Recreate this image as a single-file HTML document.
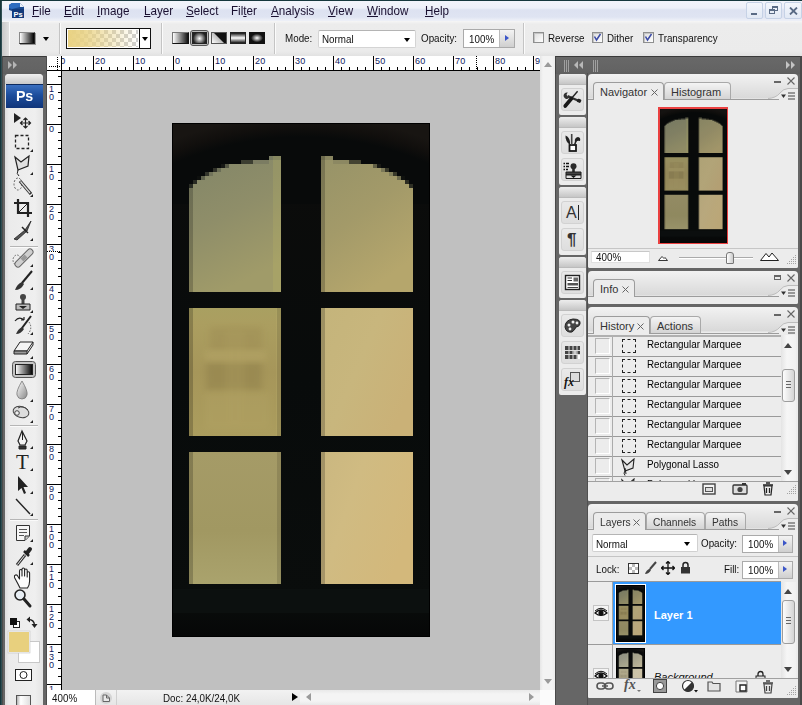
<!DOCTYPE html>
<html><head><meta charset="utf-8"><title>Photoshop</title>
<style>
*{box-sizing:border-box;margin:0;padding:0}
html,body{width:802px;height:705px;overflow:hidden;background:#666}
body{font-family:"Liberation Sans",sans-serif;font-size:10.5px;color:#111;position:relative}
.a{position:absolute}
.t{position:absolute;white-space:nowrap;line-height:1}
#menubar{left:0;top:0;width:802px;height:21px;background:linear-gradient(#f3f5fb 0,#eef1f9 8px,#dde2f1 10px,#dfe4f2 17px,#eceff7 20px)}
#menubar .t{top:5px;font-size:12.4px;color:#1a1030;transform:scaleX(.94);transform-origin:0 50%}
#menubar u{text-decoration:underline;text-underline-offset:1px}
#optbar{left:0;top:21px;width:802px;height:35px;background:linear-gradient(#f6f6f6 0,#ececec 3px,#ebebeb 30px,#e2e2e2 35px)}
.sep{position:absolute;width:2px;top:2px;height:31px;border-left:1px solid #c4c4c4;border-right:1px solid #fbfbfb}
.lbl{font-size:11px;color:#111;transform:scaleX(.893);transform-origin:0 50%}
.field{position:absolute;background:#fff;border:1px solid #d4d4d4;border-top-color:#b4b4b4}
.cb{position:absolute;width:11px;height:11px;border:1px solid #8e8f8f;box-shadow:inset 1px 1px 0 #c4c4c4;background:linear-gradient(135deg,#dcdcdc,#fff)}
.ruler{background:#fff}
.rn{position:absolute;font-size:9px;line-height:1;color:#0e1860;letter-spacing:.2px}
.dock{background:#666}
.grp{position:absolute;left:559px;width:27px;background:#ececec;border-radius:3px 3px 2px 2px;overflow:hidden}
.grp:before{content:"";position:absolute;left:0;top:0;right:0;height:10px;background:linear-gradient(#ededed,#c6c6c6);border-bottom:1px solid #bbb}
.ib{position:absolute;left:2px;width:23px;height:23px;border:1px solid #d2d2d2;border-radius:3px;background:linear-gradient(#e9e9e9,#dedede)}
.panel{position:absolute;left:588px;width:210px;background:linear-gradient(#f2f2f2 0,#d9d9d9 24px,#ececec 25px);border-radius:4px 4px 2px 2px;overflow:hidden}
.tab{position:absolute;height:17px;margin-left:-1px;border:1px solid #a9a9a9;border-bottom:none;border-radius:4px 4px 0 0;background:linear-gradient(#f4f4f4,#d4d4d4);font-size:11px;color:#333;line-height:19px;padding-left:6px;white-space:nowrap}
.tab span{display:inline-block;transform:scaleX(var(--sx,.93));transform-origin:0 50%}
.tab.on{background:#ececec;height:18px;border-color:#9c9c9c}
.tab .x{position:absolute;right:4px;top:0;font-size:11px;color:#555}
.pbody{position:absolute;left:0;right:0;background:#ececec;border-top:1px solid #9c9c9c}
.hrow{position:absolute;left:0;width:193px;height:20px;border-bottom:1px solid #9a9a9a}
.hrow .c{position:absolute;left:7px;top:1px;width:15px;height:16px;border:1px solid #b4b4b4;border-right-color:#fff;border-bottom-color:#fff;background:#ececec}
.hrow .v{position:absolute;left:24px;top:0;width:1px;height:20px;background:#aaa}
.hrow .m{position:absolute;left:34px;top:2px;width:14px;height:14px;border:1px dashed #222}
.hrow .n{position:absolute;left:59px;top:2px;font-size:11px;transform:scaleX(.893);transform-origin:0 50%;line-height:1;white-space:nowrap;color:#000}
.sb{position:absolute;background:linear-gradient(90deg,#e4e4e4,#f6f6f6 40%,#f0f0f0)}
.thumb{position:absolute;left:1px;width:13px;border:1px solid #9d9d9d;border-radius:3px;background:linear-gradient(90deg,#fdfdfd,#d4d4d4)}
</style></head><body>
<!-- window edges -->
<div class="a" id="menubar">
  <svg class="a" style="left:8px;top:2px" width="17" height="17" viewBox="0 0 17 17"><path d="M1 3 L4 1 L12 1 L16 5 L16 16 L4 16 L4 9 L1 8Z" fill="#1b4a8f"/><path d="M1 3 L4 1 L12 1 L12 5 L4 7 L1 6Z" fill="#2e6cc0"/><path d="M12 1 L16 5 L12 5Z" fill="#e8eef8"/><rect x="4" y="7" width="12" height="9" fill="#123a7c"/><text x="5.5" y="14.5" font-family="Liberation Sans,sans-serif" font-size="7.5" font-weight="bold" fill="#fff">Ps</text></svg>
  <span class="t" style="left:32px"><u>F</u>ile</span>
  <span class="t" style="left:64px"><u>E</u>dit</span>
  <span class="t" style="left:97px"><u>I</u>mage</span>
  <span class="t" style="left:144px"><u>L</u>ayer</span>
  <span class="t" style="left:186px"><u>S</u>elect</span>
  <span class="t" style="left:231px">Fil<u>t</u>er</span>
  <span class="t" style="left:271px"><u>A</u>nalysis</span>
  <span class="t" style="left:328px"><u>V</u>iew</span>
  <span class="t" style="left:367px"><u>W</u>indow</span>
  <span class="t" style="left:425px"><u>H</u>elp</span>
  <!-- window buttons -->
  <div class="a" style="left:746px;top:2px;width:17px;height:17px;border:1px solid #c6d2e6;border-radius:2px;background:linear-gradient(#f4f7fc,#e2e9f5)"><div class="a" style="left:4px;top:10px;width:6px;height:2px;background:#5a6b85"></div></div>
  <div class="a" style="left:765px;top:2px;width:17px;height:17px;border:1px solid #c6d2e6;border-radius:2px;background:linear-gradient(#f4f7fc,#e2e9f5)"><div class="a" style="left:6px;top:3px;width:6px;height:5px;border:1px solid #5a6b85;border-top-width:2px"></div><div class="a" style="left:3px;top:6px;width:6px;height:5px;border:1px solid #5a6b85;border-top-width:2px;background:#e8eef7"></div></div>
  <div class="a" style="left:784px;top:2px;width:18px;height:17px;border:1px solid #c6d2e6;border-radius:2px;background:linear-gradient(#f4f7fc,#e2e9f5)"><svg class="a" style="left:4px;top:4px" width="9" height="8" viewBox="0 0 9 8"><path d="M1 0.5 L8 7.5 M8 0.5 L1 7.5" stroke="#5a6b85" stroke-width="1.8"/></svg></div>
</div>
<div class="a" id="optbar">
  <div class="a" style="left:2px;top:1px;width:7px;height:34px;background:linear-gradient(90deg,#c9c9c9,#e0e0e0)"></div>
  <div class="a" style="left:9px;top:1px;width:1px;height:34px;background:#fafafa"></div>
  <!-- tool preset: gradient icon -->
  <div class="a" style="left:19px;top:11px;width:16px;height:12px;background:linear-gradient(90deg,#fff,#000);box-shadow:1px 1px 0 #999;border:1px solid #8a8a8a;border-right-color:#222;border-bottom-color:#222"></div>
  <div class="a" style="left:43px;top:16px;border:3px solid transparent;border-top:4px solid #000;border-bottom:none"></div>
  <div class="sep" style="left:59px"></div>
  <!-- gradient picker -->
  <div class="a" style="left:66px;top:7px;width:85px;height:21px;border:1px solid #111;background:#fff">
    <div class="a" style="left:1px;top:1px;width:70px;height:17px;background:linear-gradient(90deg,#e9d283 0,rgba(233,210,131,.85) 25%,rgba(240,225,170,0) 100%),repeating-conic-gradient(#cfcfcf 0 25%,#fff 0 50%) 0 0/8px 8px"></div>
    <div class="a" style="left:72px;top:0;width:1px;height:19px;background:#111"></div>
    <div class="a" style="left:75px;top:8px;border:3px solid transparent;border-top:4px solid #000;border-bottom:none"></div>
  </div>
  <div class="sep" style="left:161px"></div>
  <!-- gradient type buttons -->
  <div class="a" style="left:172px;top:11px;width:17px;height:12px;background:linear-gradient(90deg,#fff,#111);border:1px solid #777;border-right-color:#111;border-bottom-color:#111"></div>
  <div class="a" style="left:190px;top:9px;width:19px;height:16px;border:1px solid #555;border-radius:3px;background:#bbb"></div>
  <div class="a" style="left:192px;top:11px;width:15px;height:12px;background:radial-gradient(circle at 50% 55%,#fff 0,#222 75%);border:1px solid #222"></div>
  <div class="a" style="left:211px;top:11px;width:16px;height:12px;background:linear-gradient(45deg,#fff 0,#bbb 49%,#111 51%,#111);border:1px solid #555"></div>
  <div class="a" style="left:230px;top:11px;width:16px;height:12px;background:linear-gradient(#111,#fff 50%,#111);border:1px solid #222"></div>
  <div class="a" style="left:249px;top:11px;width:16px;height:12px;background:radial-gradient(ellipse at 50% 50%,#fff 0,#111 60%);border:1px solid #111"></div>
  <div class="sep" style="left:274px"></div>
  <span class="t lbl" style="left:285px;top:12px">Mode:</span>
  <div class="field" style="left:318px;top:9px;width:98px;height:18px;border-radius:2px"></div>
  <span class="t lbl" style="left:322px;top:13px">Normal</span>
  <div class="a" style="left:404px;top:17px;border:3.5px solid transparent;border-top:4px solid #000;border-bottom:none"></div>
  <span class="t lbl" style="left:421px;top:12px">Opacity:</span>
  <div class="field" style="left:463px;top:8px;width:52px;height:19px;border-color:#aaa"></div>
  <span class="t lbl" style="left:469px;top:13px">100%</span>
  <div class="a" style="left:499px;top:9px;width:15px;height:17px;background:linear-gradient(#f3f3f3,#cfcfcf);border-left:1px solid #bbb"></div>
  <div class="a" style="left:505px;top:14px;border:3.5px solid transparent;border-left:4px solid #3b55c8;border-right:none"></div>
  <div class="sep" style="left:523px"></div>
  <div class="cb" style="left:533px;top:11px"></div>
  <span class="t lbl" style="left:548px;top:12px">Reverse</span>
  <div class="cb" style="left:592px;top:11px"><svg width="9" height="9" viewBox="0 0 9 9" style="display:block"><path d="M1.5 3.5 L3.5 7 L7.5 1" stroke="#3a4aa6" stroke-width="1.5" fill="none"/></svg></div>
  <span class="t lbl" style="left:607px;top:12px">Dither</span>
  <div class="cb" style="left:643px;top:11px"><svg width="9" height="9" viewBox="0 0 9 9" style="display:block"><path d="M1.5 3.5 L3.5 7 L7.5 1" stroke="#3a4aa6" stroke-width="1.5" fill="none"/></svg></div>
  <span class="t lbl" style="left:658px;top:12px">Transparency</span>
</div>
<div class="a" style="left:0;top:0;width:802px;height:1px;background:#16383d"></div>
<div class="a" style="left:0;top:0;width:1px;height:705px;background:#17363b"></div>
<div class="a" style="left:1px;top:1px;width:1px;height:705px;background:#2f4e53"></div>
<!-- left tool dock -->
<div class="a dock" style="left:2px;top:56px;width:45px;height:649px"></div>
<div class="a" style="left:2px;top:56px;width:45px;height:18px;background:linear-gradient(#676767 0,#646464 12px,#5e5e5e 18px);border-top:1px solid #3a3a3a"></div><div class="a" style="left:2px;top:56px;width:1px;height:649px;background:#4c4c4c"></div><div class="a" style="left:46px;top:56px;width:1px;height:649px;background:#4c4c4c"></div>
<svg class="a" style="left:8px;top:61px" width="10" height="8" viewBox="0 0 10 8"><path d="M0 0 L4 4 L0 8Z M5 0 L9 4 L5 8Z" fill="#b5b5b5"/></svg>
<div class="a" style="left:5px;top:74px;width:38px;height:640px;border-radius:4px 4px 0 0;background:linear-gradient(90deg,#dedede 0,#ebebeb 4px,#efefef 30px,#e4e4e4 38px);overflow:hidden">
  <div class="a" style="left:0;top:0;width:38px;height:10px;background:linear-gradient(#efefef,#c9c9c9)"></div>
  <div class="a" style="left:1px;top:10px;width:37px;height:24px;background:linear-gradient(#3a6fc0 0,#1c4d9c 45%,#10357a 100%);border-top:1px solid #0d2a5e"></div>
  <span class="t" style="left:11px;top:14px;font-size:15.5px;font-weight:bold;color:#fff;letter-spacing:-0.2px;transform:scaleX(.92);transform-origin:0 0">Ps</span>
</div>
<svg class="a" style="left:5px;top:108px" width="38" height="600" viewBox="0 0 38 600" fill="none" stroke="#222" stroke-width="1">
  <!-- coordinates: svg y = page y - 108, x = page x - 5 -->
  <!-- move -->
  <path d="M9 5 L9 15 L16 10Z" fill="#222" stroke="none"/>
  <path d="M20.5 10 V20 M15.5 15 H25.5 M18.5 12 L20.5 10 L22.5 12 M18.5 18 L20.5 20 L22.5 18 M17.5 13 L15.5 15 L17.5 17 M23.5 13 L25.5 15 L23.5 17" stroke-width="1.2"/>
  <!-- marquee -->
  <rect x="10.5" y="27.5" width="13" height="13" stroke-dasharray="3 2" stroke-width="1.3"/>
  <path d="M28 44 L28 41 L25 44Z" fill="#222" stroke="none"/>
  <!-- lasso -->
  <path d="M10 49 L16 54 L24 48 L23 58 L13 62 Z" stroke-width="1.2" fill="#e0e0e0"/>
  <path d="M13 62 Q11 66 14 68" stroke-width="1"/>
  <path d="M28 67 L28 64 L25 67Z" fill="#222" stroke="none"/>
  <!-- quick select -->
  <ellipse cx="13" cy="76" rx="4" ry="6" stroke-dasharray="2 1.5" stroke="#666"/>
  <path d="M15 73 L26 86" stroke-width="3.2" stroke="#333"/><path d="M15.5 73.5 L25 85" stroke-width="1.2" stroke="#ddd"/>
  <path d="M28 89 L28 86 L25 89Z" fill="#222" stroke="none"/>
  <!-- crop -->
  <path d="M13 91 V105 H27 M9 95 H23 V109" stroke-width="2.2" stroke="#222"/><path d="M13 105 L23 95" stroke-width="1"/>
  <!-- slice -->
  <path d="M9 131 L20 122 L26 113 L22 123 L12 132Z" fill="#555" stroke="#222" stroke-width="0.8"/><path d="M17 119 L23 125" stroke-width="1.5"/>
  <path d="M28 133 L28 130 L25 133Z" fill="#222" stroke="none"/>
  <!-- sep -->
  <path d="M5 138.5 H33" stroke="#b5b5b5"/><path d="M5 139.5 H33" stroke="#fafafa"/>
  <!-- healing brush (band-aid) -->
  <ellipse cx="12" cy="152" rx="4" ry="5" stroke-dasharray="1.5 1.5" stroke="#666"/>
  <path d="M13 156 L25 144" stroke-width="7" stroke="#666" stroke-linecap="round"/><path d="M13 156 L25 144" stroke-width="5" stroke="#cfcfcf" stroke-linecap="round"/><path d="M17 152 L21 148" stroke-width="4" stroke="#999"/>
  <path d="M28 159 L28 156 L25 159Z" fill="#222" stroke="none"/>
  <!-- brush -->
  <path d="M27 163 L17 175" stroke-width="2" stroke="#222"/><path d="M17 174 Q12 176 10 182 Q16 182 19 176Z" fill="#333" stroke="none"/>
  <path d="M28 182 L28 179 L25 182Z" fill="#222" stroke="none"/>
  <!-- stamp -->
  <circle cx="18" cy="189" r="3" fill="#444" stroke="none"/><path d="M18 191 V196" stroke-width="3" stroke="#444"/><path d="M11 196 H25 V202 H11Z" fill="#bbb" stroke="#222"/><path d="M14 198 H22 L18 201Z" fill="#222" stroke="none"/>
  <path d="M28 205 L28 202 L25 205Z" fill="#222" stroke="none"/>
  <!-- history brush -->
  <path d="M26 208 L17 220" stroke-width="2"/><path d="M17 219 Q13 221 11 226 Q16 226 19 221Z" fill="#333" stroke="none"/><path d="M10 213 Q14 208 19 212 M19 212 L16 212 M19 212 L19 209" stroke-width="1.2"/><path d="M24 214 Q28 220 23 226" stroke-dasharray="1.5 1.5" stroke="#555"/>
  <path d="M28 227 L28 224 L25 227Z" fill="#222" stroke="none"/>
  <!-- eraser -->
  <path d="M9 243 L15 234 L28 234 L22 243Z" fill="#f4f4f4" stroke="#222"/><path d="M9 243 H22 V246 H9Z" fill="#999" stroke="#222"/><path d="M22 246 L28 237 V234" stroke="#222"/>
  <path d="M28 251 L28 248 L25 251Z" fill="#222" stroke="none"/>
  <!-- gradient (selected) : page (12..36, 361..377) -->
  <rect x="7.5" y="253.5" width="23" height="16" rx="3" fill="#c4c4c4" stroke="#555"/>
  <rect x="10.5" y="256.5" width="17" height="10" fill="url(#gbw)" stroke="#222"/>
  <!-- blur drop -->
  <path d="M17 273 Q11 283 12 287 Q13 291 17 291 Q21 291 22 287 Q23 283 17 273Z" fill="url(#gdrop)" stroke="#777" stroke-width="0.8"/>
  <path d="M28 294 L28 291 L25 294Z" fill="#222" stroke="none"/>
  <!-- dodge/sponge -->
  <ellipse cx="16" cy="304" rx="8" ry="5.5" fill="#ddd" stroke="#444" transform="rotate(15 16 304)"/><circle cx="12" cy="305" r="2.3" fill="#eee" stroke="#444"/><path d="M13 300 Q18 297 23 302" stroke="#444"/>
  <path d="M28 315 L28 312 L25 315Z" fill="#222" stroke="none"/>
  <path d="M5 317.5 H33" stroke="#b5b5b5"/><path d="M5 318.5 H33" stroke="#fafafa"/>
  <!-- pen -->
  <path d="M17 323 L13 333 L15 337 H20 L22 333Z" fill="#f4f4f4" stroke="#222" stroke-width="1.2"/><path d="M17.5 324 V332" stroke-width="1"/><path d="M14 338 H21 V341 H14Z" fill="#333" stroke="#222"/>
  <path d="M28 341 L28 338 L25 341Z" fill="#222" stroke="none"/>
  <!-- T -->
  <text x="11" y="361" font-family="Liberation Serif,serif" font-size="21" fill="#222" stroke="none">T</text>
  <path d="M28 363 L28 360 L25 363Z" fill="#222" stroke="none"/>
  <!-- path select arrow -->
  <path d="M13 368 L13 383 L16.5 380 L19 386 L21 385 L18.5 379 L23 379Z" fill="#222" stroke="none"/>
  <path d="M28 386 L28 383 L25 386Z" fill="#222" stroke="none"/>
  <!-- line -->
  <path d="M11 391 L25 406" stroke-width="1.4"/>
  <path d="M28 408 L28 405 L25 408Z" fill="#222" stroke="none"/>
  <path d="M5 411.5 H33" stroke="#b5b5b5"/><path d="M5 412.5 H33" stroke="#fafafa"/>
  <!-- notes -->
  <path d="M11.5 417.5 H24.5 V428 L20 432.5 H11.5Z" fill="#f6f6f6" stroke="#333"/><path d="M14 421.5 H22 M14 424.5 H22 M14 427.5 H19" stroke="#555"/><path d="M20 432 V428 H24" stroke="#333" fill="#ccc"/>
  <path d="M28 434 L28 431 L25 434Z" fill="#222" stroke="none"/>
  <!-- eyedropper -->
  <path d="M12 457 L20 447" stroke-width="3" stroke="#333"/><path d="M12.5 456.5 L19.5 447.5" stroke-width="1" stroke="#eee"/><path d="M19 443 L24 448" stroke-width="2.5" stroke="#222"/><path d="M22 445 L25 441" stroke-width="4" stroke="#222" stroke-linecap="round"/>
  <path d="M28 457 L28 454 L25 457Z" fill="#222" stroke="none"/>
  <!-- hand -->
  <path d="M13 476 L9.5 469.5 Q9 467.5 10.5 467 Q12 466.5 13 468.5 L14.5 471 V463 Q14.5 461.5 15.8 461.5 Q17 461.5 17 463 V468 V461.5 Q17 460 18.3 460 Q19.6 460 19.6 461.5 V468 V462.5 Q19.6 461 20.9 461 Q22.2 461 22.2 462.5 V469 V465 Q22.2 463.7 23.4 463.7 Q24.6 463.7 24.6 465 V473 Q24.6 477 22.5 480 H15 Z" fill="#fcfcfc" stroke="#222" stroke-width="1.1" stroke-linejoin="round"/>
  <!-- zoom -->
  <circle cx="15" cy="487" r="5" fill="#e8eef4" stroke="#222" stroke-width="1.6"/><path d="M19 491 L25 498" stroke-width="3" stroke="#222" stroke-linecap="round"/>
  <!-- default colors / swap -->
  <rect x="8.5" y="513.5" width="6" height="6" fill="#fff" stroke="#222"/><rect x="5" y="510" width="7" height="7" fill="#111" stroke="none"/>
  <path d="M23.5 511.5 Q29 511.5 29.5 517" stroke-width="1.4" fill="none"/><path d="M21.5 511.5 L25 508.5 V514.5Z M29.5 520 L26.5 516 H32.5Z" fill="#222" stroke="none"/>
  <!-- swatches -->
  <rect x="13.5" y="533.5" width="21" height="21" fill="#fff" stroke="#c8c8c8"/>
  <rect x="3.5" y="523.5" width="21" height="21" fill="#e8d07e" stroke="#f4f4f4"/><rect x="3" y="523" width="22" height="22" fill="none" stroke="#c4c4c4" stroke-width="0.6"/>
  <!-- quick mask -->
  <rect x="10.5" y="561.5" width="16" height="11" fill="#fff" stroke="#222"/><circle cx="18.5" cy="567" r="3.5" fill="#fff" stroke="#222"/>
  <!-- screen mode -->
  <rect x="11.5" y="587.5" width="14" height="14" fill="url(#gscr)" stroke="#555"/>
  <defs>
    <linearGradient id="gbw" x1="0" x2="1" y1="0" y2="0"><stop offset="0" stop-color="#fff"/><stop offset="1" stop-color="#000"/></linearGradient>
    <linearGradient id="gdrop" x1="0" x2="1" y1="0" y2="1"><stop offset="0" stop-color="#fff"/><stop offset="1" stop-color="#888"/></linearGradient>
    <linearGradient id="gscr" x1="0" x2="1" y1="0" y2="0"><stop offset="0" stop-color="#aaa"/><stop offset=".3" stop-color="#fff"/><stop offset="1" stop-color="#ddd"/></linearGradient>
  </defs>
</svg>
<!-- document window -->
<div class="a" style="left:47px;top:56px;width:508px;height:649px;background:#ececec"></div>
<div class="a" style="left:62px;top:71px;width:478px;height:619px;background:#c0c0c0"></div>
<div class="a ruler" style="left:47px;top:56px;width:493px;height:15px;border-bottom:1px solid #000;overflow:hidden">
<div class="a" style="left:-2px;top:11px;width:500px;height:3px;background:repeating-linear-gradient(90deg,#000 0 1px,transparent 1px 8px)"></div>
<div class="a" style="left:-34px;top:0;width:540px;height:14px;background:repeating-linear-gradient(90deg,#000 0 1px,transparent 1px 40px)"></div>
<div class="a" style="left:0;top:0;width:14px;height:14px;background:#fff"></div>
<span class="rn" style="left:8px;top:1px">30</span>
<span class="rn" style="left:48px;top:1px">20</span>
<span class="rn" style="left:88px;top:1px">10</span>
<span class="rn" style="left:128px;top:1px">0</span>
<span class="rn" style="left:168px;top:1px">10</span>
<span class="rn" style="left:208px;top:1px">20</span>
<span class="rn" style="left:248px;top:1px">30</span>
<span class="rn" style="left:288px;top:1px">40</span>
<span class="rn" style="left:328px;top:1px">50</span>
<span class="rn" style="left:368px;top:1px">60</span>
<span class="rn" style="left:408px;top:1px">70</span>
<span class="rn" style="left:448px;top:1px">80</span>
<span class="rn" style="left:488px;top:1px">90</span>
<div class="a" style="left:0;top:0;width:15px;height:14px;background:#fff;border-right:1px solid #000"></div>
<div class="a" style="left:10px;top:1px;width:1px;height:13px;background:repeating-linear-gradient(#000 0 1px,transparent 1px 2px)"></div>
<div class="a" style="left:2px;top:10px;width:13px;height:1px;background:repeating-linear-gradient(90deg,#000 0 1px,transparent 1px 2px)"></div>
<div class="a" style="left:429px;top:0;width:1px;height:14px;background:repeating-linear-gradient(#000 0 1px,transparent 1px 2px)"></div>
</div>
<div class="a ruler" style="left:47px;top:71px;width:15px;height:619px;border-right:1px solid #000;overflow:hidden">
<div class="a" style="left:11px;top:-3px;width:3px;height:630px;background:repeating-linear-gradient(#000 0 1px,transparent 1px 8px)"></div>
<div class="a" style="left:0;top:-27px;width:14px;height:660px;background:repeating-linear-gradient(#000 0 1px,transparent 1px 40px)"></div>
<span class="rn" style="left:2px;top:14px">1</span>
<span class="rn" style="left:2px;top:22px">0</span>
<span class="rn" style="left:2px;top:54px">0</span>
<span class="rn" style="left:2px;top:94px">1</span>
<span class="rn" style="left:2px;top:102px">0</span>
<span class="rn" style="left:2px;top:134px">2</span>
<span class="rn" style="left:2px;top:142px">0</span>
<span class="rn" style="left:2px;top:174px">3</span>
<span class="rn" style="left:2px;top:182px">0</span>
<span class="rn" style="left:2px;top:214px">4</span>
<span class="rn" style="left:2px;top:222px">0</span>
<span class="rn" style="left:2px;top:254px">5</span>
<span class="rn" style="left:2px;top:262px">0</span>
<span class="rn" style="left:2px;top:294px">6</span>
<span class="rn" style="left:2px;top:302px">0</span>
<span class="rn" style="left:2px;top:334px">7</span>
<span class="rn" style="left:2px;top:342px">0</span>
<span class="rn" style="left:2px;top:374px">8</span>
<span class="rn" style="left:2px;top:382px">0</span>
<span class="rn" style="left:2px;top:414px">9</span>
<span class="rn" style="left:2px;top:422px">0</span>
<span class="rn" style="left:2px;top:454px">1</span>
<span class="rn" style="left:2px;top:462px">0</span>
<span class="rn" style="left:2px;top:470px">0</span>
<span class="rn" style="left:2px;top:494px">1</span>
<span class="rn" style="left:2px;top:502px">1</span>
<span class="rn" style="left:2px;top:510px">0</span>
<span class="rn" style="left:2px;top:534px">1</span>
<span class="rn" style="left:2px;top:542px">2</span>
<span class="rn" style="left:2px;top:550px">0</span>
<span class="rn" style="left:2px;top:574px">1</span>
<span class="rn" style="left:2px;top:582px">3</span>
<span class="rn" style="left:2px;top:590px">0</span>
<span class="rn" style="left:2px;top:614px">1</span>
<span class="rn" style="left:2px;top:622px">4</span>
<span class="rn" style="left:2px;top:630px">0</span>
<div class="a" style="left:0;top:180px;width:14px;height:1px;background:repeating-linear-gradient(90deg,#000 0 1px,#fff 1px 2px)"></div>
</div>
<svg class="a" style="left:172px;top:123px" width="258" height="514" viewBox="0 0 258 514" shape-rendering="crispEdges">
<defs>
<linearGradient id="fr" x1="0" y1="0" x2="0" y2="1"><stop offset="0" stop-color="#0c0c0b"/><stop offset=".5" stop-color="#080b0b"/><stop offset=".93" stop-color="#0a0d0c"/><stop offset="1" stop-color="#060707"/></linearGradient>
<linearGradient id="ptl" x1="0" y1="0" x2="0.35" y2="1"><stop offset="0" stop-color="#838668"/><stop offset=".5" stop-color="#8f8e69"/><stop offset="1" stop-color="#a09b69"/></linearGradient>
<linearGradient id="ptr" x1="0" y1="0" x2="0.5" y2="1"><stop offset="0" stop-color="#979368"/><stop offset=".5" stop-color="#a39a69"/><stop offset="1" stop-color="#b5a66c"/></linearGradient>
<linearGradient id="pml" x1="0" y1="0" x2="0" y2="1"><stop offset="0" stop-color="#a9a061"/><stop offset=".12" stop-color="#ab9e60"/><stop offset=".5" stop-color="#a6965a"/><stop offset="1" stop-color="#ab9d5e"/></linearGradient>
<linearGradient id="pmr" x1="0" y1="0" x2="1" y2="0.6"><stop offset="0" stop-color="#c4b47b"/><stop offset=".5" stop-color="#c8b67d"/><stop offset="1" stop-color="#cab177"/></linearGradient>
<linearGradient id="pbl" x1="0" y1="0" x2="0" y2="1"><stop offset="0" stop-color="#a59b67"/><stop offset=".6" stop-color="#a19862"/><stop offset="1" stop-color="#aaa36d"/></linearGradient>
<linearGradient id="pbr" x1="0" y1="0" x2="1" y2="0.5"><stop offset="0" stop-color="#cab780"/><stop offset=".4" stop-color="#d0bb82"/><stop offset="1" stop-color="#d3b87b"/></linearGradient>
<linearGradient id="edge" x1="0" y1="0" x2="1" y2="0"><stop offset="0" stop-color="#000" stop-opacity=".28"/><stop offset="1" stop-color="#000" stop-opacity="0"/></linearGradient>
<linearGradient id="edger" x1="1" y1="0" x2="0" y2="0"><stop offset="0" stop-color="#000" stop-opacity=".22"/><stop offset="1" stop-color="#000" stop-opacity="0"/></linearGradient>
<radialGradient id="toparc" gradientUnits="userSpaceOnUse" cx="129" cy="332" r="340"><stop offset="0.935" stop-color="#080a0a"/><stop offset="0.965" stop-color="#110f0d"/><stop offset="1" stop-color="#181512"/></radialGradient>
<filter id="bl" x="-20%" y="-20%" width="140%" height="140%"><feGaussianBlur stdDeviation="3"/></filter><clipPath id="cml"><rect x="17" y="185" width="92" height="128"/></clipPath></defs>
<g id="win"><rect width="258" height="514" fill="#000"/>
<rect x="1" y="1" width="256" height="512" fill="url(#fr)"/>
<rect x="1" y="1" width="256" height="80" fill="url(#toparc)" shape-rendering="auto"/>
<rect x="1" y="466" width="256" height="24" fill="#0c100f"/>
<polygon points="17,169 17,65 21,65 21,61 25,61 25,57 29,57 29,57 33,57 33,53 37,53 37,53 41,53 41,49 45,49 45,49 49,49 49,45 53,45 53,45 57,45 57,41 61,41 61,41 65,41 65,41 69,41 69,41 73,41 73,41 77,41 77,41 81,41 81,41 85,41 85,41 89,41 89,41 93,41 93,41 97,41 97,37 101,37 101,37 105,37 105,37 109,37 109,169" fill="url(#ptl)"/><rect x="17" y="61" width="4" height="4" fill="#85876a" opacity="0.27"/><rect x="21" y="57" width="4" height="4" fill="#85876a" opacity="0.25"/><rect x="25" y="53" width="4" height="4" fill="#85876a" opacity="0.05"/><rect x="29" y="53" width="4" height="4" fill="#85876a" opacity="0.70"/><rect x="33" y="49" width="4" height="4" fill="#85876a" opacity="0.35"/><rect x="37" y="49" width="4" height="4" fill="#85876a" opacity="0.85"/><rect x="41" y="45" width="4" height="4" fill="#85876a" opacity="0.33"/><rect x="45" y="45" width="4" height="4" fill="#85876a" opacity="0.80"/><rect x="49" y="41" width="4" height="4" fill="#85876a" opacity="0.12"/><rect x="53" y="41" width="4" height="4" fill="#85876a" opacity="0.62"/><rect x="69" y="37" width="4" height="4" fill="#85876a" opacity="0.42"/><rect x="73" y="37" width="4" height="4" fill="#85876a" opacity="0.42"/><rect x="77" y="37" width="4" height="4" fill="#85876a" opacity="0.42"/><rect x="81" y="37" width="4" height="4" fill="#85876a" opacity="0.92"/><rect x="85" y="37" width="4" height="4" fill="#85876a" opacity="0.92"/><rect x="89" y="37" width="4" height="4" fill="#85876a" opacity="0.92"/><rect x="93" y="37" width="4" height="4" fill="#85876a" opacity="0.92"/><rect x="97" y="33" width="4" height="4" fill="#85876a" opacity="0.90"/><rect x="101" y="33" width="4" height="4" fill="#85876a" opacity="0.90"/><rect x="105" y="33" width="4" height="4" fill="#85876a" opacity="0.90"/>
<polygon points="149,169 149,37 153,37 153,37 157,37 157,37 161,37 161,41 165,41 165,41 169,41 169,41 173,41 173,41 177,41 177,41 181,41 181,41 185,41 185,41 189,41 189,41 193,41 193,41 197,41 197,41 201,41 201,45 205,45 205,45 209,45 209,49 213,49 213,49 217,49 217,53 221,53 221,53 225,53 225,57 229,57 229,57 233,57 233,61 237,61 237,65 241,65 241,169" fill="url(#ptr)"/><rect x="149" y="33" width="4" height="4" fill="#98946a" opacity="0.90"/><rect x="153" y="33" width="4" height="4" fill="#98946a" opacity="0.90"/><rect x="157" y="33" width="4" height="4" fill="#98946a" opacity="0.90"/><rect x="161" y="37" width="4" height="4" fill="#98946a" opacity="0.92"/><rect x="165" y="37" width="4" height="4" fill="#98946a" opacity="0.92"/><rect x="169" y="37" width="4" height="4" fill="#98946a" opacity="0.92"/><rect x="173" y="37" width="4" height="4" fill="#98946a" opacity="0.92"/><rect x="177" y="37" width="4" height="4" fill="#98946a" opacity="0.42"/><rect x="181" y="37" width="4" height="4" fill="#98946a" opacity="0.42"/><rect x="185" y="37" width="4" height="4" fill="#98946a" opacity="0.42"/><rect x="201" y="41" width="4" height="4" fill="#98946a" opacity="0.62"/><rect x="205" y="41" width="4" height="4" fill="#98946a" opacity="0.12"/><rect x="209" y="45" width="4" height="4" fill="#98946a" opacity="0.80"/><rect x="213" y="45" width="4" height="4" fill="#98946a" opacity="0.33"/><rect x="217" y="49" width="4" height="4" fill="#98946a" opacity="0.85"/><rect x="221" y="49" width="4" height="4" fill="#98946a" opacity="0.35"/><rect x="225" y="53" width="4" height="4" fill="#98946a" opacity="0.70"/><rect x="229" y="53" width="4" height="4" fill="#98946a" opacity="0.05"/><rect x="233" y="57" width="4" height="4" fill="#98946a" opacity="0.25"/><rect x="237" y="61" width="4" height="4" fill="#98946a" opacity="0.27"/>
<rect x="17" y="185" width="92" height="128" fill="url(#pml)"/><g clip-path="url(#cml)"><rect x="34" y="239" width="56" height="28" fill="#8a7a46" opacity="0.42" shape-rendering="auto" filter="url(#bl)"/><rect x="38" y="204" width="52" height="23" fill="#978550" opacity="0.32" shape-rendering="auto" filter="url(#bl)"/><rect x="33" y="227" width="61" height="12" fill="#b9a96a" opacity="0.4" shape-rendering="auto" filter="url(#bl)"/><rect x="33" y="269" width="65" height="38" fill="#b4a466" opacity="0.3" shape-rendering="auto" filter="url(#bl)"/><rect x="53" y="207" width="20" height="98" fill="#b0a062" opacity="0.25" shape-rendering="auto" filter="url(#bl)"/><rect x="105" y="185" width="4" height="128" fill="#c0b470" opacity="0.5" shape-rendering="auto" filter="url(#bl)"/></g>
<rect x="149" y="185" width="92" height="128" fill="url(#pmr)"/>
<rect x="17" y="329" width="92" height="132" fill="url(#pbl)"/>
<rect x="149" y="329" width="92" height="132" fill="url(#pbr)"/>
<rect x="17" y="65" width="4" height="104" fill="#000" opacity=".2"/><rect x="101" y="33" width="8" height="136" fill="#c8c060" opacity=".18"/><rect x="17" y="185" width="4" height="128" fill="#000" opacity=".2"/><rect x="105" y="185" width="4" height="128" fill="#000" opacity=".12"/><rect x="17" y="329" width="4" height="132" fill="#000" opacity=".2"/><rect x="105" y="329" width="4" height="132" fill="#000" opacity=".12"/><rect x="149" y="33" width="4" height="136" fill="#000" opacity=".2"/><rect x="149" y="185" width="4" height="128" fill="#000" opacity=".2"/><rect x="149" y="329" width="4" height="132" fill="#000" opacity=".2"/></g></svg>
<!-- v scrollbar -->
<div class="a" style="left:540px;top:56px;width:15px;height:634px;background:linear-gradient(90deg,#e6e6e6 0,#f3f3f3 3px,#f3f3f3 12px,#ebebeb 15px)"></div>
<div class="a" style="left:544px;top:62px;border:4px solid transparent;border-bottom:5px solid #9a9a9a;border-top:none"></div>
<div class="a" style="left:544px;top:679px;border:4px solid transparent;border-top:5px solid #9a9a9a;border-bottom:none"></div>
<!-- status bar -->
<div class="a" style="left:47px;top:690px;width:508px;height:15px;background:linear-gradient(#f2f2f2,#e6e6e6)"></div><div class="a" style="left:116px;top:690px;width:1px;height:15px;background:#d0d0d0"></div>
<div class="a" style="left:47px;top:690px;width:49px;height:15px;background:#fff;border-right:1px solid #bbb"></div>
<span class="t lbl" style="left:52px;top:693px">400%</span>
<div class="a" style="left:100px;top:692px;width:12px;height:12px;border-radius:6px;background:#d4d4d4"></div>
<svg class="a" style="left:101px;top:693px" width="10" height="10" viewBox="0 0 10 10"><path d="M2 2 H5.5 L8.5 5 V8.5 H2Z" fill="#e8e8e8" stroke="#666" stroke-width="1"/><path d="M5.5 2 V5 H8.5" fill="none" stroke="#666"/></svg>
<span class="t lbl" style="left:163px;top:693px">Doc: 24,0K/24,0K</span>
<div class="a" style="left:292px;top:693px;border:4px solid transparent;border-left:6px solid #000;border-right:none"></div>
<div class="a" style="left:300px;top:690px;width:240px;height:15px;background:linear-gradient(#e9e9e9 0,#f4f4f4 4px,#f4f4f4 11px,#e8e8e8 15px)"></div>
<div class="a" style="left:306px;top:693px;border:4px solid transparent;border-right:5px solid #9a9a9a;border-left:none"></div>
<div class="a" style="left:529px;top:693px;border:4px solid transparent;border-left:5px solid #9a9a9a;border-right:none"></div>
<div class="a" style="left:540px;top:690px;width:15px;height:15px;background:#fbfbfb"></div>
<!-- right dock -->
<div class="a dock" style="left:555px;top:56px;width:247px;height:649px;border-left:1px solid #4a4a4a"></div>
<div class="a" style="left:555px;top:56px;width:247px;height:18px;background:linear-gradient(#686868 0,#646464 12px,#5e5e5e 18px);border-top:1px solid #3a3a3a;border-left:1px solid #444"></div>
<div class="a" style="left:587px;top:73px;width:1px;height:632px;background:#505050"></div>
<div class="a" style="left:800px;top:56px;width:2px;height:649px;background:#484848"></div>
<!-- grips and arrows -->
<div class="a" style="left:564px;top:60px;width:5px;height:12px;background:repeating-linear-gradient(90deg,#a0a0a0 0 1px,transparent 1px 2px)"></div>
<div class="a" style="left:593px;top:60px;width:5px;height:12px;background:repeating-linear-gradient(90deg,#a0a0a0 0 1px,transparent 1px 2px)"></div>
<svg class="a" style="left:574px;top:61px" width="10" height="8" viewBox="0 0 10 8"><path d="M4 0 L0 4 L4 8Z M9 0 L5 4 L9 8Z" fill="#b8b8b8"/></svg>
<svg class="a" style="left:786px;top:61px" width="10" height="8" viewBox="0 0 10 8"><path d="M0 0 L4 4 L0 8Z M5 0 L9 4 L5 8Z" fill="#c4c4c4"/></svg>
<!-- icon column -->
<div class="grp" style="top:74px;height:41px">
  <div class="ib" style="top:14px"><svg width="21" height="21" viewBox="0 0 21 21"><path d="M5.5 7 L17 12" stroke="#333" stroke-width="2.4"/><path d="M5.8 3.6 A3.2 3.2 0 1 0 7.4 8.6 L5.2 7.2 L4.6 5.2Z" fill="#333"/><rect x="15" y="10" width="4" height="3.6" rx="1" transform="rotate(24 17 12)" fill="#222"/><path d="M15.6 2.2 L9 10" stroke="#222" stroke-width="1.4"/><path d="M9.5 9.5 L3.2 17" stroke="#1a1a1a" stroke-width="3.6" stroke-linecap="round"/></svg></div>
</div>
<div class="grp" style="top:117px;height:68px">
  <div class="ib" style="top:14px"><svg width="21" height="21" viewBox="0 0 21 21"><rect x="7.5" y="13" width="6.5" height="6" fill="#fff" stroke="#1a1a1a" stroke-width="1.8"/><path d="M9.7 13 V2" stroke="#444" stroke-width="1.6"/><path d="M8 13 Q3 9 3.5 3.5 Q7.5 5 8 10Z" fill="#222"/><path d="M12.5 13 L14 9" stroke="#222" stroke-width="1.5"/><path d="M12.8 9.5 Q12.5 5.5 16 5 Q19 5.5 18 9 Q15.5 8 14 10Z" fill="#222"/></svg></div>
  <div class="ib" style="top:41px"><svg width="21" height="21" viewBox="0 0 21 21"><circle cx="11.5" cy="7.2" r="3" fill="#2a2a2a"/><path d="M11.5 9 V13" stroke="#2a2a2a" stroke-width="2.6"/><path d="M4 13 H19 V16 H4Z" fill="#444" stroke="#1a1a1a"/><path d="M4 16 H19 V19.5 H4Z" fill="#ddd" stroke="#1a1a1a"/><path d="M8.5 16.5 H14.5 L11.5 19Z" fill="#111"/><path d="M1.5 4.5 H3 M4 4.5 H7 M1.5 7.5 H3 M4 7.5 H7 M1.5 10.5 H3 M4 10.5 H6" stroke="#111" stroke-width="1.4"/></svg></div>
</div>
<div class="grp" style="top:187px;height:68px">
  <div class="ib" style="top:14px"><span class="t" style="left:4px;top:3px;font-size:16px;color:#333">A</span><div class="a" style="left:16px;top:3px;width:1px;height:15px;background:#222"></div></div>
  <div class="ib" style="top:41px"><span class="t" style="left:5px;top:2px;font-size:17px;color:#333;font-weight:bold">&#182;</span></div>
</div>
<div class="grp" style="top:257px;height:41px">
  <div class="ib" style="top:14px"><svg width="21" height="21" viewBox="0 0 21 21"><rect x="3.5" y="3.5" width="14" height="14" fill="#fff" stroke="#222" stroke-width="1.4"/><rect x="11.5" y="5.5" width="4.5" height="4" fill="#666"/><path d="M5.5 6 H10 M5.5 8.5 H10" stroke="#333"/><rect x="5.5" y="11" width="10.5" height="2.5" fill="#555"/><path d="M5.5 15.5 H16" stroke="#444"/></svg></div>
</div>
<div class="grp" style="top:300px;height:95px">
  <div class="ib" style="top:14px"><svg width="21" height="21" viewBox="0 0 21 21"><path d="M3 12 Q3 5 11 4 Q19 4 18 9 Q17 12 14 12 Q13 15 10 17 Q4 18 3 12Z" fill="#444" stroke="#222"/><circle cx="7" cy="10" r="1.5" fill="#eee"/><circle cx="11" cy="7" r="1.5" fill="#eee"/><circle cx="15" cy="8" r="1.4" fill="#eee"/><circle cx="8" cy="14" r="1.4" fill="#eee"/></svg></div>
  <div class="ib" style="top:41px"><svg width="21" height="21" viewBox="0 0 21 21"><rect x="3" y="4" width="15" height="13" fill="#444"/><path d="M3 8.5 H18 M3 12.5 H18 M7 4 V17 M11 4 V17 M15 4 V17" stroke="#ddd" stroke-width="1"/><rect x="11.5" y="9" width="3" height="3" fill="#ccc"/><rect x="15.5" y="13" width="2.5" height="4" fill="#fff"/></svg></div>
  <div class="ib" style="top:68px"><svg width="21" height="21" viewBox="0 0 21 21"><rect x="8.5" y="3.5" width="9" height="9" fill="#ddd" stroke="#555"/><text x="2" y="17" font-family="Liberation Serif,serif" font-style="italic" font-weight="bold" font-size="12" fill="#111">fx</text></svg></div>
</div>
<!-- Navigator panel: page x=588..798, y=74..267 -->
<div class="panel" style="--sx:1;top:74px;height:194px">
  <div class="tab" style="left:77px;top:8px;width:67px"><span>Histogram</span></div>
  <div class="pbody" style="top:25px;height:169px"></div>
  <div class="tab on" style="left:6px;top:8px;width:71px"><span>Navigator</span><svg class="a" style="right:5px;top:6px" width="7" height="7" viewBox="0 0 7 7"><path d="M0.5 0.5 L6.5 6.5 M6.5 0.5 L0.5 6.5" stroke="#666" stroke-width="1"/></svg></div>
  <!-- swoosh -->
  <svg class="a" style="left:180px;top:12px" width="30" height="13" viewBox="0 0 30 13"><path d="M0 13 Q8 12 12 7 Q15 3 20 3 H30 V13Z" fill="#ececec"/><path d="M0 12.5 Q8 12 12 7 Q15 3 20 2.5 H30" fill="none" stroke="#bcbcbc" stroke-width="1"/></svg><div class="a" style="left:191px;top:25px;width:19px;height:1px;background:#ececec"></div>
  <div class="a" style="left:186px;top:7px;width:7px;height:2px;background:#666"></div>
  <svg class="a" style="left:199px;top:3px" width="8" height="8" viewBox="0 0 8 8"><path d="M0.5 0.5 L7.5 7.5 M7.5 0.5 L0.5 7.5" stroke="#666" stroke-width="1.1"/></svg>
  <svg class="a" style="left:193px;top:18px" width="15" height="8" viewBox="0 0 15 8"><path d="M0 2.5 H5 L2.5 6Z" fill="#333"/><path d="M7 1 H14 M7 4 H14 M7 7 H14" stroke="#444" stroke-width="1.2"/></svg>
  <!-- thumbnail with red frame -->
  <div class="a" style="left:70px;top:33px;width:70px;height:137px;background:#ea4040"></div><div class="a" style="left:71.5px;top:34.5px;width:67px;height:134px;background:#000"></div>
  <svg class="a" style="left:71.5px;top:34.5px;filter:brightness(.9) saturate(.85)" width="67" height="134" viewBox="0 0 258 514" preserveAspectRatio="none"><use href="#win"/></svg>
  <div class="a" style="left:0;top:174px;width:210px;height:1px;background:#c6c6c6"></div>
  <div class="a" style="left:3px;top:177px;width:59px;height:12px;background:#fff;border:1px solid #e0e0e0;border-top-color:#c8c8c8"></div>
  <span class="t lbl" style="left:8px;top:178px">400%</span>
  <svg class="a" style="left:70px;top:181px" width="10" height="6" viewBox="0 0 10 6"><path d="M0.5 5.5 L4 1.5 L6 3.5 L7 2.5 L9.5 5.5Z" fill="#fff" stroke="#222" stroke-width="0.9"/></svg>
  <div class="a" style="left:91px;top:183px;width:74px;height:2px;background:#aaa;border-bottom:1px solid #fff"></div>
  <div class="a" style="left:138px;top:178px;width:8px;height:12px;border:1px solid #777;border-radius:3px 3px 1px 1px;background:linear-gradient(90deg,#fff,#ccc)"></div>
  <svg class="a" style="left:172px;top:178px" width="19" height="9" viewBox="0 0 19 9"><path d="M0.5 8.5 L6 1.5 L9 5 L12 1 L18.5 8.5Z" fill="#fff" stroke="#222" stroke-width="1"/></svg>
  <svg class="a" style="left:199px;top:181px" width="10" height="10" viewBox="0 0 10 10"><path d="M8 8h1v1h-1z M6 8h1v1h-1z M4 8h1v1h-1z M2 8h1v1h-1z M0 8h1v1h-1z M8 6h1v1h-1z M6 6h1v1h-1z M4 6h1v1h-1z M2 6h1v1h-1z M8 4h1v1h-1z M6 4h1v1h-1z M4 4h1v1h-1z M8 2h1v1h-1z M6 2h1v1h-1z M8 0h1v1h-1z" fill="#a4a4a4"/></svg>
</div>
<!-- Info panel: y=271..304 -->
<div class="panel" style="--sx:1;top:271px;height:33px">
  <div class="pbody" style="top:25px;height:8px"></div>
  <div class="tab on" style="left:6px;top:8px;width:42px"><span>Info</span><svg class="a" style="right:5px;top:6px" width="7" height="7" viewBox="0 0 7 7"><path d="M0.5 0.5 L6.5 6.5 M6.5 0.5 L0.5 6.5" stroke="#666" stroke-width="1"/></svg></div>
  <svg class="a" style="left:180px;top:12px" width="30" height="13" viewBox="0 0 30 13"><path d="M0 13 Q8 12 12 7 Q15 3 20 3 H30 V13Z" fill="#ececec"/><path d="M0 12.5 Q8 12 12 7 Q15 3 20 2.5 H30" fill="none" stroke="#bcbcbc" stroke-width="1"/></svg><div class="a" style="left:191px;top:25px;width:19px;height:1px;background:#ececec"></div>
  <div class="a" style="left:186px;top:4px;width:7px;height:5px;border:1px solid #666;border-top-width:2px"></div>
  <svg class="a" style="left:199px;top:3px" width="8" height="8" viewBox="0 0 8 8"><path d="M0.5 0.5 L7.5 7.5 M7.5 0.5 L0.5 7.5" stroke="#666" stroke-width="1.1"/></svg>
  <svg class="a" style="left:193px;top:18px" width="15" height="8" viewBox="0 0 15 8"><path d="M0 2.5 H5 L2.5 6Z" fill="#333"/><path d="M7 1 H14 M7 4 H14 M7 7 H14" stroke="#444" stroke-width="1.2"/></svg>
</div>
<!-- History panel -->
<div class="panel" style="--sx:1;top:307px;height:194px">
  <div class="tab" style="left:63px;top:9px;width:51px"><span>Actions</span></div>
  <div class="pbody" style="top:26px;height:168px"></div>
  <div class="tab on" style="left:6px;top:9px;width:57px"><span>History</span><svg class="a" style="right:5px;top:6px" width="7" height="7" viewBox="0 0 7 7"><path d="M0.5 0.5 L6.5 6.5 M6.5 0.5 L0.5 6.5" stroke="#666" stroke-width="1"/></svg></div>
  <svg class="a" style="left:180px;top:13px" width="30" height="13" viewBox="0 0 30 13"><path d="M0 13 Q8 12 12 7 Q15 3 20 3 H30 V13Z" fill="#ececec"/><path d="M0 12.5 Q8 12 12 7 Q15 3 20 2.5 H30" fill="none" stroke="#bcbcbc" stroke-width="1"/></svg><div class="a" style="left:191px;top:26px;width:19px;height:1px;background:#ececec"></div>
  <div class="a" style="left:186px;top:7px;width:7px;height:2px;background:#666"></div>
  <svg class="a" style="left:199px;top:3px" width="8" height="8" viewBox="0 0 8 8"><path d="M0.5 0.5 L7.5 7.5 M7.5 0.5 L0.5 7.5" stroke="#666" stroke-width="1.1"/></svg>
  <svg class="a" style="left:193px;top:19px" width="15" height="8" viewBox="0 0 15 8"><path d="M0 2.5 H5 L2.5 6Z" fill="#333"/><path d="M7 1 H14 M7 4 H14 M7 7 H14" stroke="#444" stroke-width="1.2"/></svg>
  <div class="a" style="left:0;top:28px;width:193px;height:146px;overflow:hidden;border-top:2px solid #b0b0b0"><div class="a" style="left:24px;top:0;width:1px;height:1px;background:#aaa"></div>
    <div class="hrow" style="top:0px"><div class="c"></div><div class="v"></div><div class="m"></div><span class="n">Rectangular Marquee</span></div>
    <div class="hrow" style="top:20px"><div class="c"></div><div class="v"></div><div class="m"></div><span class="n">Rectangular Marquee</span></div>
    <div class="hrow" style="top:40px"><div class="c"></div><div class="v"></div><div class="m"></div><span class="n">Rectangular Marquee</span></div>
    <div class="hrow" style="top:60px"><div class="c"></div><div class="v"></div><div class="m"></div><span class="n">Rectangular Marquee</span></div>
    <div class="hrow" style="top:80px"><div class="c"></div><div class="v"></div><div class="m"></div><span class="n">Rectangular Marquee</span></div>
    <div class="hrow" style="top:100px"><div class="c"></div><div class="v"></div><div class="m"></div><span class="n">Rectangular Marquee</span></div>
    <div class="hrow" style="top:120px"><div class="c"></div><div class="v"></div><svg class="a" style="left:32px;top:1px" width="18" height="18" viewBox="0 0 18 18"><path d="M2 2 L7 7 L14 1 L13 10 L5 13Z" fill="#e4e4e4" stroke="#222" stroke-width="1.1"/><path d="M5 13 Q3 15 5 17.5 M5 10 L6 16" stroke="#222" fill="none"/></svg><span class="n">Polygonal Lasso</span></div>
    <div class="hrow" style="top:140px"><div class="c"></div><div class="v"></div><svg class="a" style="left:32px;top:1px" width="18" height="18" viewBox="0 0 18 18"><path d="M2 2 L7 7 L14 1 L13 10 L5 13Z" fill="#e4e4e4" stroke="#222" stroke-width="1.1"/><path d="M5 13 Q3 15 5 17.5 M5 10 L6 16" stroke="#222" fill="none"/></svg><span class="n">Polygonal Lasso</span></div>
  </div>
  <div class="sb" style="left:193px;top:28px;width:15px;height:146px"></div>
  <div class="a" style="left:196px;top:36px;border:4px solid transparent;border-bottom:5px solid #444;border-top:none"></div>
  <div class="a" style="left:196px;top:163px;border:4px solid transparent;border-top:5px solid #444;border-bottom:none"></div>
  <div class="thumb" style="left:194px;top:62px;height:33px"><div class="a" style="left:3px;top:11px;width:5px;height:7px;background:repeating-linear-gradient(#666 0 1px,transparent 1px 3px)"></div></div>
  <div class="a" style="left:0;top:174px;width:210px;height:20px;background:#ececec;border-top:1px solid #a0a0a0"></div>
  <svg class="a" style="left:114px;top:176px" width="14" height="12" viewBox="0 0 14 12"><rect x="1" y="1" width="12" height="10" fill="#f4f4f4" stroke="#444" stroke-width="1.4"/><rect x="3.5" y="4.5" width="7" height="4" fill="#ddd" stroke="#555"/></svg>
  <svg class="a" style="left:144px;top:175px" width="16" height="13" viewBox="0 0 16 13"><rect x="1" y="3" width="14" height="9" rx="1" fill="#ddd" stroke="#333" stroke-width="1.3"/><circle cx="8" cy="7.5" r="2.6" fill="#444"/><rect x="10" y="1" width="4" height="2" fill="#333"/></svg>
  <svg class="a" style="left:174px;top:174px" width="12" height="15" viewBox="0 0 12 15"><path d="M2 5 H10 L9 14 H3Z" fill="#eee" stroke="#222" stroke-width="1.2"/><path d="M1 4 H11 M4 2 H8 M4.5 7 V12 M7.5 7 V12" stroke="#222" stroke-width="1.3"/></svg>
  <svg class="a" style="left:199px;top:178px" width="10" height="10" viewBox="0 0 10 10"><path d="M8 8h1v1h-1z M6 8h1v1h-1z M4 8h1v1h-1z M2 8h1v1h-1z M0 8h1v1h-1z M8 6h1v1h-1z M6 6h1v1h-1z M4 6h1v1h-1z M2 6h1v1h-1z M8 4h1v1h-1z M6 4h1v1h-1z M4 4h1v1h-1z M8 2h1v1h-1z M6 2h1v1h-1z M8 0h1v1h-1z" fill="#a4a4a4"/></svg>
</div>
<!-- Layers panel -->
<div class="panel" style="top:504px;height:194px">
  <div class="tab" style="left:59px;top:8px;width:59px"><span>Channels</span></div>
  <div class="tab" style="left:118px;top:8px;width:41px"><span>Paths</span></div>
  <div class="pbody" style="top:25px;height:169px"></div>
  <div class="tab on" style="left:6px;top:8px;width:53px"><span>Layers</span><svg class="a" style="right:5px;top:6px" width="7" height="7" viewBox="0 0 7 7"><path d="M0.5 0.5 L6.5 6.5 M6.5 0.5 L0.5 6.5" stroke="#666" stroke-width="1"/></svg></div>
  <svg class="a" style="left:180px;top:12px" width="30" height="13" viewBox="0 0 30 13"><path d="M0 13 Q8 12 12 7 Q15 3 20 3 H30 V13Z" fill="#ececec"/><path d="M0 12.5 Q8 12 12 7 Q15 3 20 2.5 H30" fill="none" stroke="#bcbcbc" stroke-width="1"/></svg><div class="a" style="left:191px;top:25px;width:19px;height:1px;background:#ececec"></div>
  <div class="a" style="left:186px;top:7px;width:7px;height:2px;background:#666"></div>
  <svg class="a" style="left:199px;top:3px" width="8" height="8" viewBox="0 0 8 8"><path d="M0.5 0.5 L7.5 7.5 M7.5 0.5 L0.5 7.5" stroke="#666" stroke-width="1.1"/></svg>
  <svg class="a" style="left:193px;top:18px" width="15" height="8" viewBox="0 0 15 8"><path d="M0 2.5 H5 L2.5 6Z" fill="#333"/><path d="M7 1 H14 M7 4 H14 M7 7 H14" stroke="#444" stroke-width="1.2"/></svg>
  <div class="field" style="left:4px;top:30px;width:106px;height:18px;border-radius:2px;border-color:#d0d0d0;border-top-color:#b4b4b4"></div>
  <span class="t lbl" style="left:8px;top:35px">Normal</span>
  <div class="a" style="left:96px;top:38px;border:3.5px solid transparent;border-top:4px solid #000;border-bottom:none"></div>
  <span class="t lbl" style="left:113px;top:34px">Opacity:</span>
  <div class="field" style="left:154px;top:31px;width:51px;height:18px;border-color:#aaa"></div>
  <span class="t lbl" style="left:160px;top:35px">100%</span>
  <div class="a" style="left:190px;top:32px;width:14px;height:16px;background:linear-gradient(#f3f3f3,#cfcfcf);border-left:1px solid #bbb"></div>
  <div class="a" style="left:195px;top:36px;border:3.5px solid transparent;border-left:4px solid #3b55c8;border-right:none"></div>
  <div class="a" style="left:0;top:52px;width:210px;height:1px;background:#c4c4c4"></div>
  <span class="t lbl" style="left:8px;top:60px">Lock:</span>
  <div class="a" style="left:40px;top:59px;width:11px;height:11px;border:1px solid #333;background:repeating-conic-gradient(#bbb 0 25%,#fff 0 50%) 0 0/6px 6px"></div>
  <svg class="a" style="left:56px;top:57px" width="14" height="14" viewBox="0 0 14 14"><path d="M12 1 L6 8" stroke="#444" stroke-width="2"/><path d="M6 7.5 Q2 9 1 13 Q5 13 7 9Z" fill="#444"/></svg>
  <svg class="a" style="left:73px;top:57px" width="14" height="14" viewBox="0 0 14 14"><path d="M7 0.5 V13.5 M0.5 7 H13.5 M5 2.5 L7 0.5 L9 2.5 M5 11.5 L7 13.5 L9 11.5 M2.5 5 L0.5 7 L2.5 9 M11.5 5 L13.5 7 L11.5 9" stroke="#111" stroke-width="1.3" fill="none"/></svg>
  <svg class="a" style="left:92px;top:57px" width="11" height="13" viewBox="0 0 11 13"><path d="M3 6 V4 Q3 1.5 5.5 1.5 Q8 1.5 8 4 V6" fill="none" stroke="#222" stroke-width="1.5"/><rect x="1" y="6" width="9" height="6.5" fill="#333"/></svg>
  <span class="t lbl" style="left:136px;top:60px">Fill:</span>
  <div class="field" style="left:154px;top:57px;width:51px;height:18px;border-color:#aaa"></div>
  <span class="t lbl" style="left:160px;top:61px">100%</span>
  <div class="a" style="left:190px;top:58px;width:14px;height:16px;background:linear-gradient(#f3f3f3,#cfcfcf);border-left:1px solid #bbb"></div>
  <div class="a" style="left:195px;top:62px;border:3.5px solid transparent;border-left:4px solid #3b55c8;border-right:none"></div>
  <div class="a" style="left:0;top:77px;width:193px;height:97px;overflow:hidden;border-top:1px solid #9a9a9a;background:#ececec">
    <div class="a" style="left:25px;top:0;width:168px;height:62px;background:#3399ff"></div>
    <div class="a" style="left:24px;top:0;width:1px;height:97px;background:#a6a6a6"></div>
    <div class="a" style="left:0;top:62px;width:193px;height:1px;background:#9a9a9a"></div>
    <svg class="a" style="left:5px;top:23px" width="16" height="16" viewBox="0 0 16 16"><rect x="0.5" y="0.5" width="15" height="15" fill="#f4f4f4" stroke="#c4c4c4"/><path d="M2 8 Q8 2 14 8 Q8 13 2 8Z" fill="#fff" stroke="#111" stroke-width="1.2"/><circle cx="8" cy="8" r="2.6" fill="#111"/><path d="M2 6 Q8 0.5 14 6" stroke="#111" fill="none" stroke-width="1"/></svg>
    <svg class="a" style="left:5px;top:86px" width="16" height="16" viewBox="0 0 16 16"><rect x="0.5" y="0.5" width="15" height="15" fill="#f4f4f4" stroke="#c4c4c4"/><path d="M2 8 Q8 2 14 8 Q8 13 2 8Z" fill="#fff" stroke="#111" stroke-width="1.2"/><circle cx="8" cy="8" r="2.6" fill="#111"/><path d="M2 6 Q8 0.5 14 6" stroke="#111" fill="none" stroke-width="1"/></svg>
    <div class="a" style="left:27px;top:2px;width:31px;height:59px;background:#000;border:1px solid #fff"></div>
    <svg class="a" style="left:29px;top:4px;filter:brightness(.9) saturate(.85)" width="27" height="55" viewBox="0 0 258 514" preserveAspectRatio="none"><use href="#win"/></svg>
    <span class="t" style="left:66px;top:28px;font-size:11px;font-weight:bold;color:#fff">Layer 1</span>
    <div class="a" style="left:28px;top:66px;width:29px;height:40px;background:#000"></div>
    <svg class="a" style="left:29px;top:67px;filter:saturate(.45) brightness(1.08)" width="27" height="55" viewBox="0 0 258 514" preserveAspectRatio="none"><use href="#win"/></svg>
    <span class="t" style="left:66px;top:90px;font-size:11px;font-style:italic;color:#111">Background</span>
    <svg class="a" style="left:167px;top:88px" width="11" height="13" viewBox="0 0 11 13"><path d="M3 6 V4 Q3 1.5 5.5 1.5 Q8 1.5 8 4 V6" fill="none" stroke="#222" stroke-width="1.3"/><rect x="1" y="6" width="9" height="6.5" fill="#ddd" stroke="#222"/></svg>
  </div>
  <div class="sb" style="left:193px;top:78px;width:15px;height:96px"></div>
  <div class="a" style="left:196px;top:85px;border:4px solid transparent;border-bottom:5px solid #444;border-top:none"></div>
  <div class="a" style="left:196px;top:163px;border:4px solid transparent;border-top:5px solid #444;border-bottom:none"></div>
  <div class="thumb" style="left:194px;top:96px;height:44px"><div class="a" style="left:3px;top:16px;width:5px;height:7px;background:repeating-linear-gradient(#666 0 1px,transparent 1px 3px)"></div></div>
  <div class="a" style="left:0;top:174px;width:210px;height:20px;background:#ececec;border-top:1px solid #a0a0a0"></div>
  <svg class="a" style="left:8px;top:177px" width="18" height="10" viewBox="0 0 18 10"><rect x="1" y="2" width="8" height="6" rx="3" fill="none" stroke="#555" stroke-width="1.6"/><rect x="9" y="2" width="8" height="6" rx="3" fill="none" stroke="#555" stroke-width="1.6"/><path d="M6 5 H12" stroke="#555" stroke-width="1.6"/></svg>
  <span class="t" style="left:36px;top:174px;font-family:'Liberation Serif',serif;font-style:italic;font-weight:bold;font-size:14px;color:#555">fx</span><div class="a" style="left:49px;top:186px;border:2px solid transparent;border-top:2px solid #777;border-bottom:none"></div>
  <svg class="a" style="left:65px;top:175px" width="14" height="14" viewBox="0 0 14 14"><rect x="0.5" y="0.5" width="13" height="13" fill="#999" stroke="#444"/><circle cx="7" cy="7" r="3.6" fill="#fff" stroke="#444"/></svg>
  <svg class="a" style="left:93px;top:175px" width="18" height="15" viewBox="0 0 18 15"><circle cx="7" cy="7" r="5.5" fill="#fff" stroke="#333" stroke-width="1.2"/><path d="M3 11 A5.5 5.5 0 0 0 11 3Z" fill="#333"/><path d="M13 11 H17 L15 13.5Z" fill="#111"/></svg>
  <svg class="a" style="left:119px;top:176px" width="14" height="12" viewBox="0 0 14 12"><path d="M1 2 H5 L6 3.5 H13 V11 H1Z" fill="#e4e4e4" stroke="#555" stroke-width="1.2"/></svg>
  <svg class="a" style="left:147px;top:176px" width="13" height="13" viewBox="0 0 13 13"><path d="M1 1 H12 V12 H1Z" fill="#f4f4f4" stroke="#777"/><path d="M5 5 H11 V11 H5Z" fill="#fff" stroke="#222" stroke-width="1.4"/></svg>
  <svg class="a" style="left:174px;top:175px" width="12" height="15" viewBox="0 0 12 15"><path d="M2 5 H10 L9 14 H3Z" fill="#eee" stroke="#444" stroke-width="1.2"/><path d="M1 4 H11 M4 2 H8 M4.5 7 V12 M7.5 7 V12" stroke="#444" stroke-width="1.3"/></svg>
  <svg class="a" style="left:199px;top:182px" width="10" height="10" viewBox="0 0 10 10"><path d="M8 8h1v1h-1z M6 8h1v1h-1z M4 8h1v1h-1z M2 8h1v1h-1z M0 8h1v1h-1z M8 6h1v1h-1z M6 6h1v1h-1z M4 6h1v1h-1z M2 6h1v1h-1z M8 4h1v1h-1z M6 4h1v1h-1z M4 4h1v1h-1z M8 2h1v1h-1z M6 2h1v1h-1z M8 0h1v1h-1z" fill="#a4a4a4"/></svg>
</div>
</body></html>
